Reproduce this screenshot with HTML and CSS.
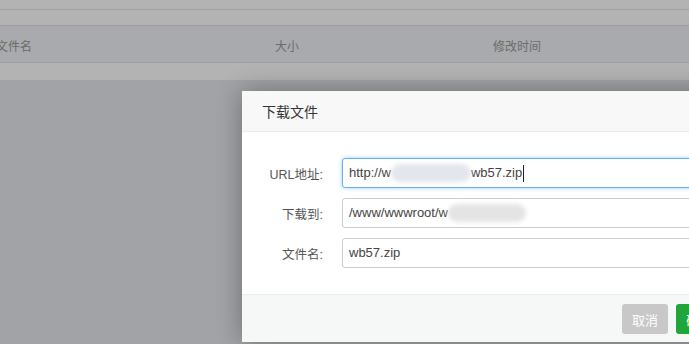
FILE: index.html
```html
<!DOCTYPE html>
<html lang="zh-CN">
<head>
<meta charset="utf-8">
<title>下载文件</title>
<link rel="stylesheet" href="styles.css">
</head>
<body>
<div class="page">
  <div class="bar bar-a"></div>
  <div class="bar bar-b"></div>
  <div class="thead">
    <span class="col col-name">文件名</span>
    <span class="col col-size">大小</span>
    <span class="col col-time">修改时间</span>
  </div>
  <div class="bar bar-c"></div>
  <div class="rest"></div>
</div>

<div class="dialog">
  <div class="dlg-head">下载文件</div>
  <div class="dlg-body">
    <div class="row">
      <label class="lbl">URL地址:</label>
      <div class="inp focus">http://w<span class="smudge smudge-url"></span>wb57.zip<span class="caret"></span></div>
    </div>
    <div class="row">
      <label class="lbl">下载到:</label>
      <div class="inp">/www/wwwroot/w<span class="smudge smudge-path"></span></div>
    </div>
    <div class="row">
      <label class="lbl">文件名:</label>
      <div class="inp">wb57.zip</div>
    </div>
  </div>
  <div class="dlg-foot">
    <button class="btn btn-cancel">取消</button>
    <button class="btn btn-ok">确定</button>
  </div>
</div>
</body>
</html>
```

FILE: styles.css
```css
html, body {
  margin: 0;
  padding: 0;
}
body {
  width: 689px;
  height: 344px;
  overflow: hidden;
  background: #a2a3a7;
  font-family: "Liberation Sans", "Noto Sans CJK SC", sans-serif;
  position: relative;
}
.page {
  display: flex;
  flex-direction: column;
}
.bar {
  background: #b3b3b3;
}
.bar-a {
  height: 9px;
  border-bottom: 1px solid #a0a0a0;
}
.bar-b {
  height: 15px;
  border-bottom: 1px solid #9c9c9c;
}
.thead {
  height: 37px;
  box-sizing: border-box;
  padding-top: 3px;
  background: #a9aaad;
  border-bottom: 1px solid #9e9e9e;
  display: flex;
  align-items: center;
  font-size: 12px;
  color: #6b6b6b;
  font-family: "Noto Sans CJK SC", sans-serif;
}
.col-name { margin-left: -4px; width: 279px; }
.col-size { width: 218px; }
.bar-c {
  height: 17px;
}
.rest {
  flex: 1;
}

.dialog {
  position: absolute;
  left: 242px;
  top: 91px;
  width: 495px;
  height: 251px;
  background: #fff;
  box-shadow: 0 0 24px rgba(0, 0, 0, 0.32);
  display: flex;
  flex-direction: column;
}
.dlg-head {
  height: 40px;
  line-height: 40px;
  padding-left: 20px;
  background: #f8f8f8;
  border-bottom: 1px solid #ececec;
  font-size: 14px;
  color: #333;
  font-family: "Noto Sans CJK SC", sans-serif;
}
.dlg-body {
  height: 162px;
  box-sizing: border-box;
  padding-top: 26px;
  display: flex;
  flex-direction: column;
  gap: 10px;
}
.row {
  display: flex;
  align-items: center;
  height: 30px;
}
.lbl {
  flex: 0 0 81px;
  text-align: right;
  font-size: 12.5px;
  color: #555;
  margin-right: 19px;
  font-family: "Liberation Sans", "Noto Sans CJK SC", sans-serif;
}
.inp {
  flex: 0 0 420px;
  height: 30px;
  box-sizing: border-box;
  border: 1px solid #ccc;
  border-radius: 3px;
  padding-left: 6px;
  font-size: 13px;
  line-height: 28px;
  color: #444;
  white-space: nowrap;
  display: flex;
  align-items: center;
}
.inp.focus {
  border-color: #66afe9;
  box-shadow: 0 0 4px rgba(102, 175, 233, 0.6);
}
.smudge {
  display: inline-block;
  height: 18px;
  border-radius: 9px;
  filter: blur(2px);
}
.smudge-url {
  width: 80px;
  background: #e3e6ec;
}
.smudge-path {
  width: 78px;
  background: #e4e4e4;
}
.caret {
  display: inline-block;
  width: 1px;
  height: 17px;
  background: #222;
  margin-left: 1px;
}
.dlg-foot {
  flex: 1;
  background: #f6f7f7;
  border-top: 1px solid #ececec;
  display: flex;
  justify-content: flex-end;
  align-items: flex-start;
  padding: 9px 15px 0 0;
  gap: 8px;
}
.btn {
  width: 46px;
  height: 30px;
  border: 0;
  border-radius: 3px;
  color: #fff;
  font-size: 13px;
  font-family: "Noto Sans CJK SC", sans-serif;
  padding: 0;
}
.btn-cancel {
  background: #c8c8c8;
}
.btn-ok {
  background: #20a53a;
}
```
